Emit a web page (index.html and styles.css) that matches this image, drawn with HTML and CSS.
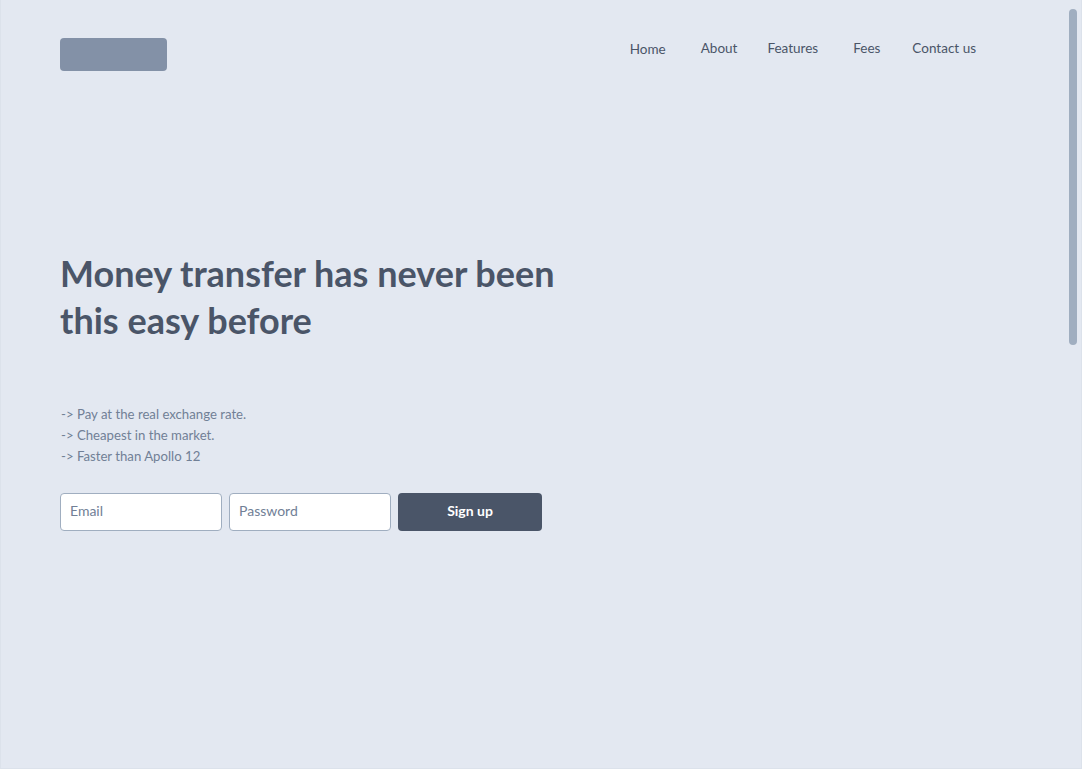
FILE: index.html
```html
<!DOCTYPE html>
<html lang="en">
<head>
<meta charset="utf-8">
<title>Money transfer</title>
<link rel="stylesheet" href="styles.css">
</head>
<body>
<div class="frame">
  <div class="page">
    <header class="header">
      <div class="logo"></div>
      <nav class="nav">
        <a class="nav-link nav-home" href="#">Home</a>
        <a class="nav-link nav-about" href="#">About</a>
        <a class="nav-link nav-features" href="#">Features</a>
        <a class="nav-link nav-fees" href="#">Fees</a>
        <a class="nav-link nav-contact" href="#">Contact us</a>
      </nav>
    </header>
    <main class="hero">
      <h1 class="title">Money transfer has never been this easy before</h1>
      <ul class="perks">
        <li>-&gt; Pay at the real exchange rate.</li>
        <li>-&gt; Cheapest in the market.</li>
        <li>-&gt; Faster than Apollo 12</li>
      </ul>
      <form class="signup">
        <input class="field" type="email" placeholder="Email">
        <input class="field" type="password" placeholder="Password">
        <button class="btn" type="button">Sign up</button>
      </form>
    </main>
  </div>
  <div class="rail">
    <div class="thumb"></div>
  </div>
</div>
</body>
</html>
```

FILE: styles.css
```css
html, body {
  margin: 0;
  height: 100%;
  overflow: hidden;
  background: #e3e8f1;
}
body {
  font-family: Lato, "Noto Sans", sans-serif;
  color: #4a5568;
}
.frame {
  height: 100vh;
  box-sizing: border-box;
  display: flex;
  border: 1px solid #dce2eb;
  border-top: 0;
  background: #e3e8f1;
}
.page {
  flex: 1;
  padding: 38px 91px 0 59px;
  box-sizing: border-box;
}
.rail {
  width: 14px;
  box-sizing: border-box;
  padding: 9px 4px 0 2px;
}
.thumb {
  height: 336px;
  background: #a0aec0;
  border-radius: 4px;
}
.header {
  display: flex;
  justify-content: space-between;
  align-items: flex-start;
}
.logo {
  width: 107px;
  height: 33px;
  background: #8391a7;
  border-radius: 4px;
}
.nav {
  display: flex;
  padding-top: 2px;
}
.nav-link {
  color: #4a5568;
  text-decoration: none;
  font-size: 13.5px;
}
.nav-home {
  position: relative;
  top: 1px;
}
.nav-about { margin-left: 35px; }
.nav-features { margin-left: 30px; }
.nav-fees { margin-left: 35px; }
.nav-contact { margin-left: 32px; }
.hero {
  padding-top: 179px;
}
.title {
  margin: 0;
  width: 520px;
  font-size: 36px;
  line-height: 47px;
  font-weight: 700;
  color: #4a5568;
}
.perks {
  list-style: none;
  margin: 60px 0 0 1px;
  padding: 0;
  font-size: 13.2px;
  line-height: 21px;
  color: #718096;
}
.signup {
  display: flex;
  gap: 7px;
  margin-top: 26px;
}
.field {
  width: 162px;
  height: 38px;
  box-sizing: border-box;
  border: 1px solid #a0aec0;
  border-radius: 4px;
  background: #fff;
  padding: 0 9px 3px;
  font-family: Lato, "Noto Sans", sans-serif;
  font-size: 14px;
  color: #4a5568;
}
.field::placeholder {
  color: #718096;
}
.btn {
  width: 144px;
  height: 38px;
  box-sizing: border-box;
  border: 0;
  border-radius: 4px;
  padding: 0 0 4px;
  background: #4a5568;
  color: #fff;
  font-family: Lato, "Noto Sans", sans-serif;
  font-size: 14px;
  font-weight: 700;
}
```
